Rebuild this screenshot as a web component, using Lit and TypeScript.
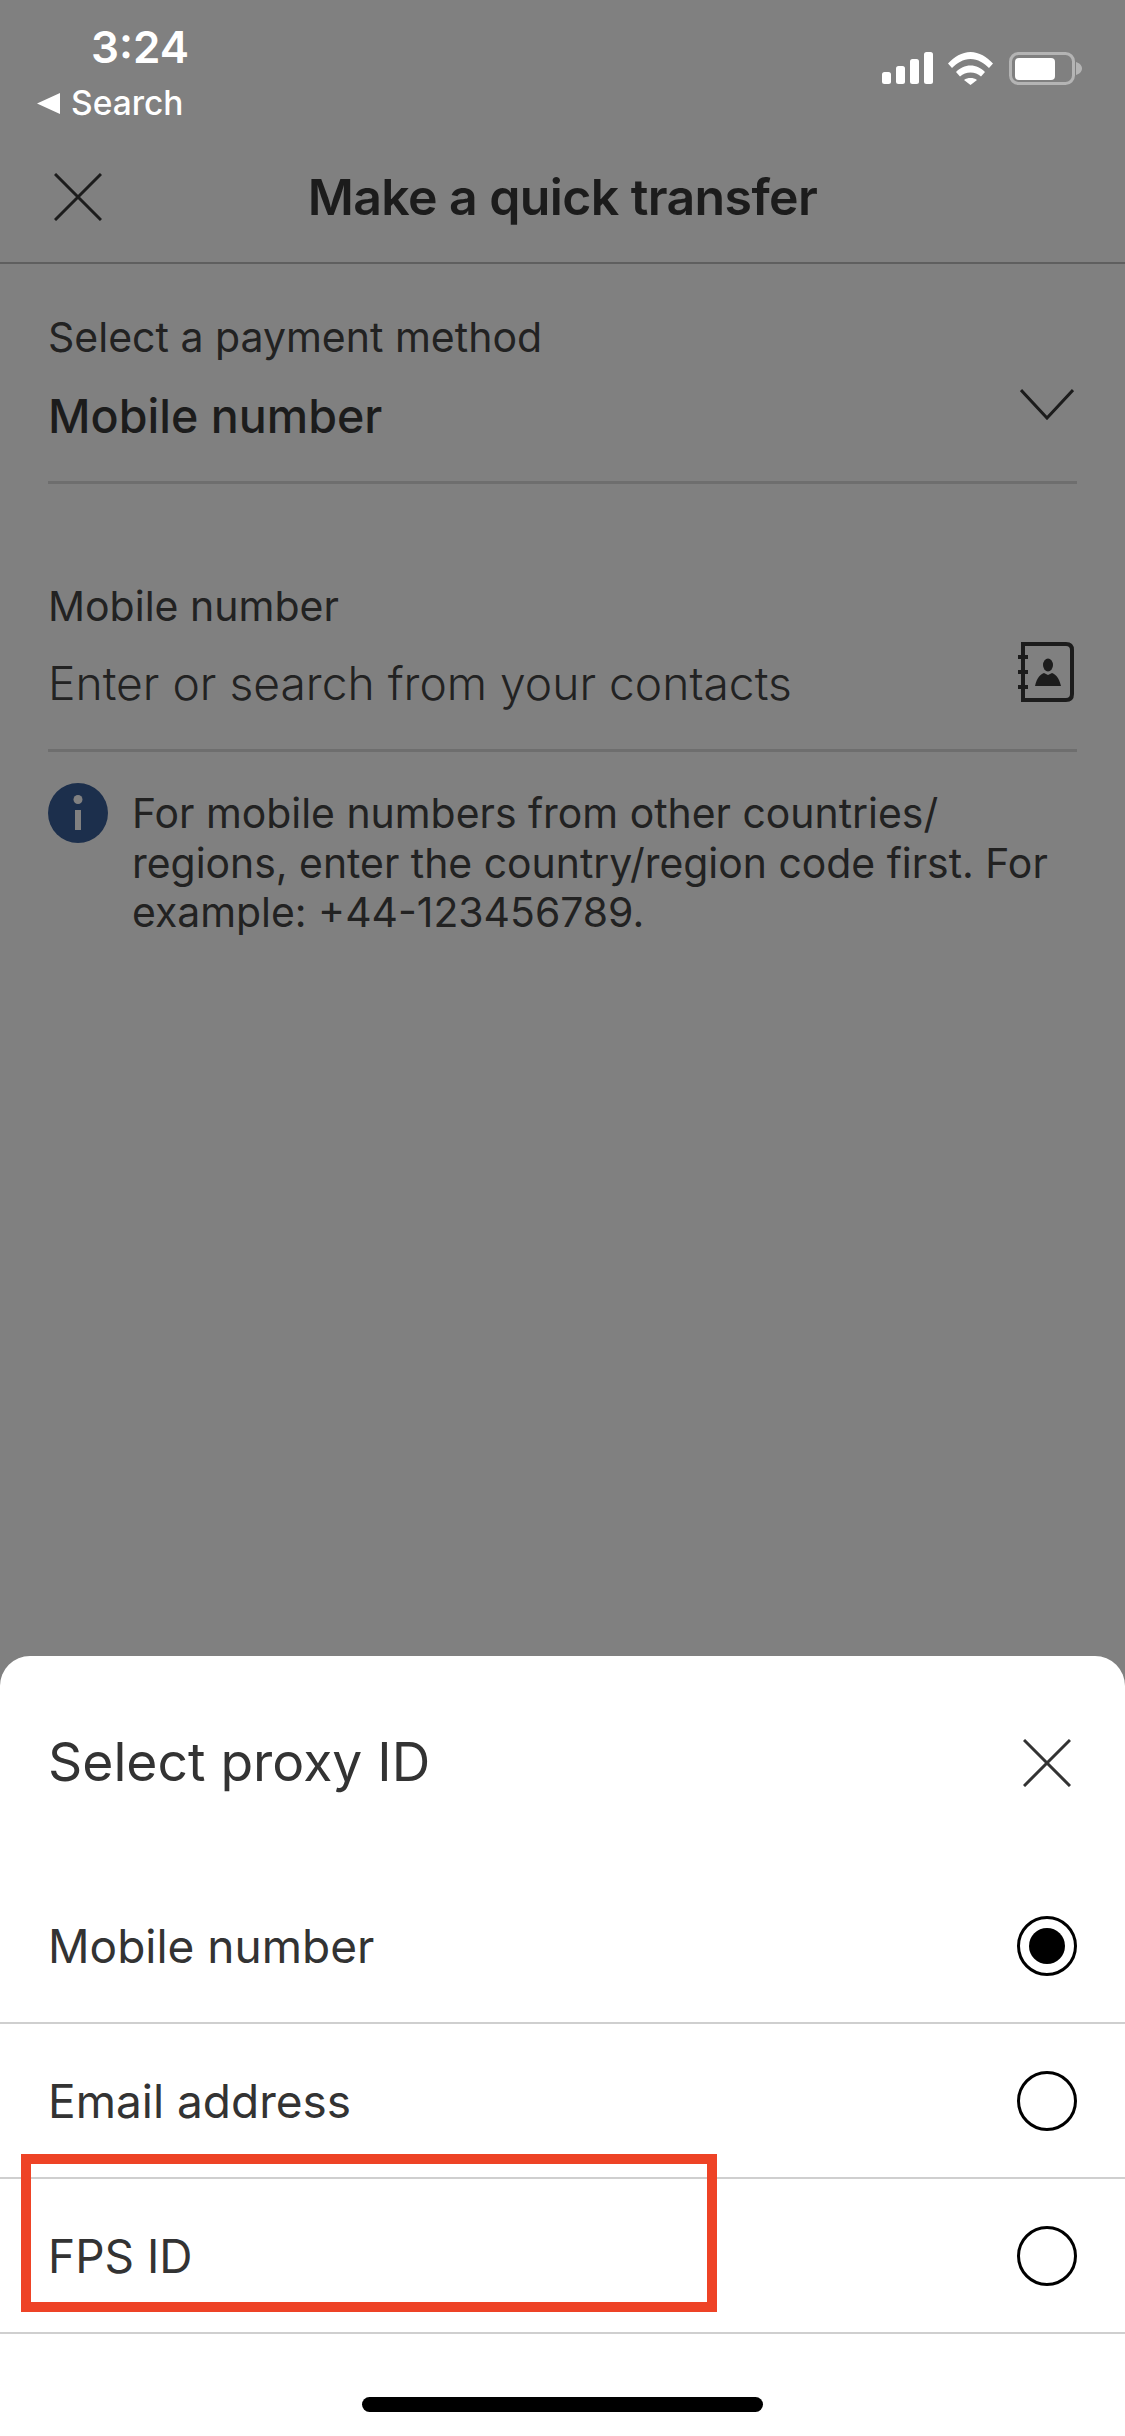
import { LitElement, html, css } from "lit";
import { customElement } from "lit/decorators.js";

const closeIcon = (color: string, size: number) => html`<svg class="ic" width=${size} height=${size} viewBox="0 0 48 48" fill="none" stroke=${color} stroke-width="3"><path d="M1 1L47 47M47 1L1 47"/></svg>`;

@customElement("app-root")
export class AppRoot extends LitElement {
  static styles = css`
    :host { display: flex; flex-direction: column; width: 1125px; height: 2436px; background: #808080; font-family: Inter, "Liberation Sans", sans-serif; color: #1c1c1c; position: relative; overflow: hidden; }
    svg { display: block; flex: none; }
    .status { height: 156px; display: flex; justify-content: space-between; box-sizing: border-box; padding: 22px 43px 0 37px; flex: none; }
    .status-left { color: #fff; display: flex; flex-direction: column; }
    .time { font-size: 44px; line-height: 50px; font-weight: 600; margin-left: 54px; }
    .back { display: flex; align-items: center; gap: 11px; font-size: 33.5px; line-height: 40px; font-weight: 500; margin-top: 11px; }
    .status-icons { display: flex; padding-top: 30px; align-items: flex-start; }
    .signal { margin-right: 15px; }
    .wifi { margin-right: 16px; }
    .appbar { height: 108px; flex: none; box-sizing: border-box; border-bottom: 2px solid #5f5f5f; position: relative; display: flex; align-items: center; justify-content: center; padding-bottom: 24px; }
    .appbar .ic { position: absolute; left: 54px; top: 17px; }
    .title { font-size: 50px; line-height: 60px; font-weight: 560; letter-spacing: -0.6px; }
    .form { padding: 0 48px; flex: none; display: flex; flex-direction: column; }
    .field { border-bottom: 3px solid #6e6e6e; display: flex; justify-content: space-between; box-sizing: border-box; }
    .field.method { height: 220px; padding-top: 48px; margin-bottom: 97px; }
    .field.number { height: 171px; }
    .label { font-size: 41px; line-height: 50px; font-weight: 400; color: #222; }
    .value { font-size: 46.6px; line-height: 56px; font-weight: 500; margin-top: 26px; }
    .placeholder { font-size: 46.2px; line-height: 56px; font-weight: 300; margin-top: 24px; color: #222; }
    .chev { margin: 76px 3px 0 0; }
    .book { margin: 61px 3px 0 0; }
    .note { display: flex; gap: 24px; margin-top: 31px; }
    .note p { margin: 0; font-size: 40.9px; line-height: 49.5px; font-weight: 400; padding-top: 6px; color: #222; }
    .sheet { margin-top: auto; height: 780px; box-sizing: border-box; background: #fff; border-radius: 30px 30px 0 0; color: #333; display: flex; flex-direction: column; }
    .sheet-head { height: 213px; flex: none; box-sizing: border-box; padding: 72px 54px 0 48px; display: flex; justify-content: space-between; }
    .sheet-title { font-size: 53.4px; line-height: 64px; font-weight: 400; padding-top: 2px; }
    .sheet-head .ic { margin-top: 11px; }
    .row { height: 155px; flex: none; box-sizing: border-box; border-bottom: 2px solid #cfcfcf; padding: 0 48px; display: flex; align-items: center; justify-content: space-between; font-size: 46px; font-weight: 400; }
    .row span { padding-top: 1px; }
    .radio { width: 60px; height: 60px; box-sizing: border-box; border: 3px solid #000; border-radius: 50%; display: flex; align-items: center; justify-content: center; }
    .dot { width: 36px; height: 36px; border-radius: 50%; background: #000; }
    .home { width: 401px; height: 15px; background: #000; border-radius: 8px; margin: 63px auto 0; flex: none; }
    .mark { position: absolute; left: 21px; top: 2154px; width: 696px; height: 158px; box-sizing: border-box; border: 10px solid #ee4326; }
  `;

  render() {
    return html`
      <div class="status">
        <div class="status-left">
          <div class="time">3:24</div>
          <div class="back">
            <svg width="23" height="21" viewBox="0 0 23 21"><path d="M23 0V21L0 10.5Z" fill="#fff"/></svg>
            <span>Search</span>
          </div>
        </div>
        <div class="status-icons">
          <svg class="signal" width="51" height="33" viewBox="0 0 51 33" fill="#fff">
            <rect x="0" y="20" width="9" height="12" rx="2.5"/><rect x="14" y="14" width="9" height="18" rx="2.5"/><rect x="28" y="7" width="9" height="25" rx="2.5"/><rect x="42" y="0" width="9" height="32" rx="2.5"/>
          </svg>
          <svg class="wifi" width="45" height="33" viewBox="0 0 45 33" fill="#fff">
            <path d="M0 11.5C6 5 14 0 22.5 0S39 5 45 11.5L41 16C36 11 30 7 22.5 7S9 11 4 16Z"/>
            <path d="M8 20C12 16 17 13.5 22.5 13.5S33 16 37 20L33 24.5C30 22 26.5 20.5 22.5 20.5S15 22 12 24.5Z"/>
            <path d="M16 28C18 26.5 20 26 22.5 26S27 26.5 29 28L22.5 33Z"/>
          </svg>
          <svg width="73" height="33" viewBox="0 0 73 33">
            <rect x="1.5" y="1.5" width="63" height="30" rx="8" fill="none" stroke="#b4b4b4" stroke-width="3"/>
            <rect x="6" y="6" width="40" height="22" rx="4" fill="#fff"/>
            <path d="M67 10C70 11 73 13 73 16.5S70 22 67 23Z" fill="#b4b4b4"/>
          </svg>
        </div>
      </div>
      <div class="appbar">
        ${closeIcon("#1c1c1c", 48)}
        <div class="title">Make a quick transfer</div>
      </div>
      <div class="form">
        <div class="field method">
          <div>
            <div class="label">Select a payment method</div>
            <div class="value">Mobile number</div>
          </div>
          <svg class="chev" width="54" height="32" viewBox="0 0 54 32" fill="none" stroke="#1c1c1c" stroke-width="3"><path d="M1 2L27 30L53 2"/></svg>
        </div>
        <div class="field number">
          <div>
            <div class="label">Mobile number</div>
            <div class="placeholder">Enter or search from your contacts</div>
          </div>
          <svg class="book" width="56" height="60" viewBox="0 0 56 60" fill="none" stroke="#1c1c1c" stroke-width="4">
            <path d="M5 2H48Q54 2 54 8V52Q54 58 48 58H5Z"/>
            <path d="M0 15H10M0 30H10M0 45H10"/>
            <ellipse cx="30" cy="23" rx="5" ry="6.5" fill="#1c1c1c" stroke="none"/>
            <path d="M17 44C19 35 23 32 26 31L30 33L34 31C37 32 41 35 43 44Z" fill="#1c1c1c" stroke="none"/>
          </svg>
        </div>
        <div class="note">
          <svg width="60" height="60" viewBox="0 0 60 60">
            <circle cx="30" cy="30" r="30" fill="#1c2f4c"/>
            <circle cx="30" cy="16.5" r="4.5" fill="#808080"/>
            <rect x="27" y="27" width="6" height="20" fill="#808080"/>
          </svg>
          <p>For mobile numbers from other countries/<br>regions, enter the country/region code first. For<br>example: +44-123456789.</p>
        </div>
      </div>
      <div class="sheet">
        <div class="sheet-head">
          <div class="sheet-title">Select proxy ID</div>
          ${closeIcon("#333", 48)}
        </div>
        <div class="row"><span>Mobile number</span><div class="radio"><div class="dot"></div></div></div>
        <div class="row"><span>Email address</span><div class="radio"></div></div>
        <div class="row"><span>FPS ID</span><div class="radio"></div></div>
        <div class="home"></div>
      </div>
      <div class="mark"></div>
    `;
  }
}
